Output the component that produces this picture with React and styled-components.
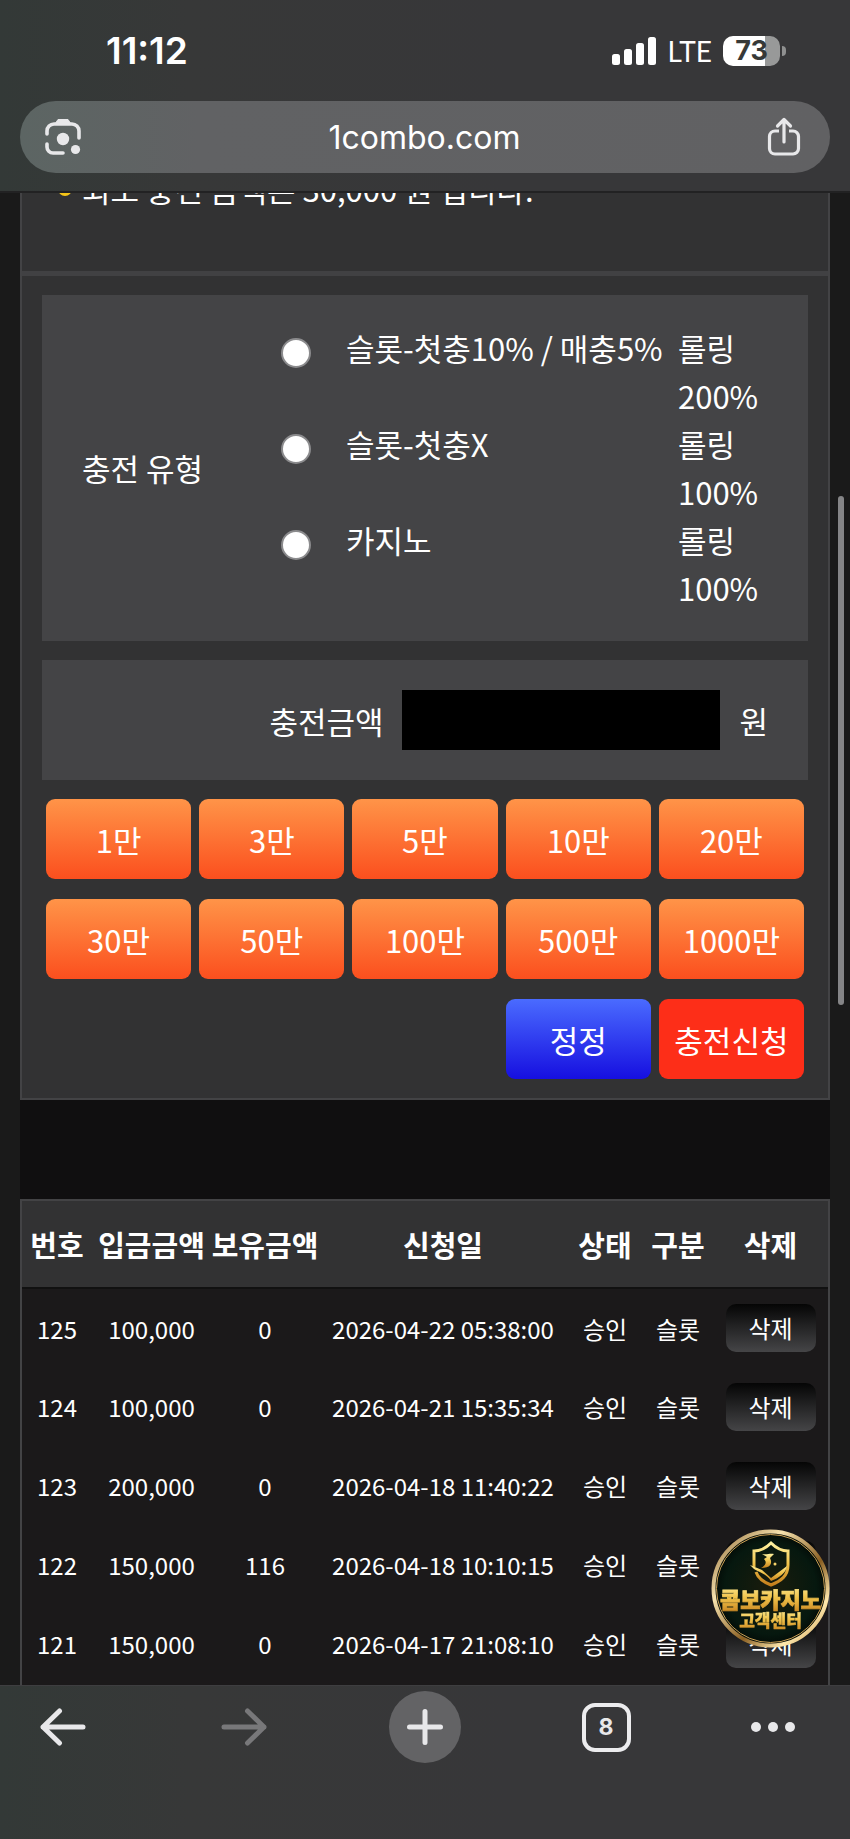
import React, { useState } from 'react';

import styled, { createGlobalStyle } from 'styled-components';

// Constants
const fonts = {
  system: "Inter, 'Liberation Sans', sans-serif",
  carrier: "Lato, 'Liberation Sans', sans-serif",
  page: "'Noto Sans CJK KR', 'Noto Sans', sans-serif",
};

const colors = {
  page: '#1a1a1a',
  band: '#100f10',
  panel: '#323233',
  box: '#444446',
  border: '#434345',
  row: '#1b191a',
  bar: 'linear-gradient(90deg, #333937 0%, #373838 22%, #373739 60%)',
};

const GlobalStyle = createGlobalStyle`
  * {
    box-sizing: border-box;
  }

  body {
    margin: 0;
    background: ${colors.page};
    color: #ffffff;
    font-family: ${fonts.page};
    font-size: 31px;
  }

  button, input {
    font: inherit;
    color: inherit;
  }
`;

const Screen = styled.div`
  display: flex;
  flex-direction: column;
  min-height: 100vh;
`;

const BrowserHeader = styled.header`
  position: relative;
  z-index: 1;
  padding: 0 20px 18px;
  background: ${colors.bar};
  border-bottom: 2px solid #222223;
  font-family: ${fonts.system};
`;

const StatusBar = styled.div`
  display: flex;
  align-items: center;
  justify-content: space-between;
  height: 101px;
  padding: 0 44px 0 86px;
`;

const Time = styled.span`
  font-size: 37px;
  font-weight: 600;
`;

const StatusIcons = styled.div`
  display: flex;
  align-items: center;
  gap: 11px;
`;

const Carrier = styled.span`
  font-family: ${fonts.carrier};
  font-size: 28px;
`;

const Battery = styled.div`
  display: flex;
  align-items: center;
  gap: 2px;

  &::after {
    content: '';
    width: 4px;
    height: 10px;
    border-radius: 0 5px 5px 0;
    background: #8f9090;
  }
`;

const BatteryLevel = styled.span`
  width: 57px;
  height: 30px;
  border-radius: 10px;
  background: linear-gradient(90deg, #ffffff 73%, #989999 73%);
  color: #363938;
  font-size: 27px;
  font-weight: 700;
  line-height: 30px;
  text-align: center;
`;

const AddressBar = styled.div`
  display: flex;
  align-items: center;
  justify-content: space-between;
  height: 72px;
  padding: 0 29px 0 24px;
  border-radius: 36px;
  background: linear-gradient(90deg, #5c6563 0%, #616264 22%, #616163 100%);
`;

const Address = styled.span`
  font-size: 32px;
`;

const IconButton = styled.button`
  display: flex;
  align-items: center;
  justify-content: center;
  padding: 0;
  border: 0;
  background: none;
  color: #e8e8ea;

  &:disabled {
    color: #78787a;
  }
`;

const Main = styled.main`
  flex: 1;
  display: flex;
  flex-direction: column;
  margin: 0 20px;
  background: ${colors.band};
`;

const Panel = styled.section`
  margin-bottom: 99px;
  border: 2px solid ${colors.border};
  border-top: 0;
  background: ${colors.panel};
`;

// Scrolled partly under the browser header
const Notice = styled.ul`
  margin: -27px 0 0;
  padding: 0 0 59px 60px;
  border-bottom: 5px solid #414143;
  line-height: 46px;
  list-style: none;
`;

const NoticeItem = styled.li`
  display: flex;
  align-items: center;

  &::before {
    content: '';
    width: 14px;
    height: 14px;
    margin: 0 10px 0 -24px;
    border-radius: 50%;
    background: #f5c518;
  }
`;

const Form = styled.form`
  display: flex;
  flex-direction: column;
  gap: 19px;
  padding: 19px 20px;
`;

const TypeBox = styled.div`
  display: flex;
  align-items: center;
  padding: 29px 40px;
  background: ${colors.box};
  line-height: 48px;
`;

const TypeTitle = styled.div`
  flex: 0 0 199px;
`;

const TypeList = styled.div`
  flex: 1;
  display: grid;
`;

const TypeOption = styled.label`
  display: grid;
  grid-template-columns: 65px 1fr 90px;
`;

const Radio = styled.input`
  appearance: none;
  width: 30px;
  height: 30px;
  margin: 14px 0 0;
  border: 2px solid #8b8b8d;
  border-radius: 50%;
  background: #ffffff;

  &:checked {
    border: 9px solid #2f6df6;
  }
`;

const AmountBox = styled.div`
  display: flex;
  align-items: center;
  justify-content: flex-end;
  gap: 19px;
  padding: 30px 40px;
  background: ${colors.box};
`;

const AmountInput = styled.input`
  width: 318px;
  height: 60px;
  padding: 0 12px;
  border: 0;
  background: #000000;
  text-align: right;
`;

const ButtonGrid = styled.div`
  display: grid;
  grid-template-columns: repeat(5, 1fr);
  gap: 20px 8px;
  padding: 0 4px;
`;

const buttonBackgrounds = {
  amount: 'linear-gradient(#ff9448, #fb4f1e)',
  reset: 'linear-gradient(#4a6bff, #160fe0)',
  submit: '#fd2e18',
};

const ActionButton = styled.button`
  height: 80px;
  padding: 0;
  border: 0;
  border-radius: 9px;
  background: ${(props) => buttonBackgrounds[props.$kind || 'amount']};
  white-space: nowrap;
`;

const ResetButton = styled(ActionButton)`
  grid-column: 4;
`;

const History = styled.section`
  flex: 1;
  border: 2px solid ${colors.border};
  border-bottom: 0;
  background: ${colors.row};
`;

const Table = styled.table`
  width: 100%;
  table-layout: fixed;
  border-collapse: collapse;
  font-size: 24px;
  text-align: center;
  white-space: nowrap;

  th {
    height: 87px;
    padding: 0;
    border-bottom: 2px solid #111111;
    background: ${colors.panel};
    font-size: 29px;
    font-weight: 700;
  }

  td {
    height: 79px;
    padding: 0;
  }
`;

const Col = styled.col`
  width: ${(props) => props.$width}px;
`;

const DeleteButton = styled.button`
  display: block;
  width: 90px;
  height: 48px;
  margin: 0 auto;
  padding: 0;
  border: 0;
  border-radius: 10px;
  background: linear-gradient(#050505, #454547);
  line-height: 46px;
`;

const ScrollThumb = styled.div`
  position: fixed;
  top: 496px;
  right: 6px;
  width: 6px;
  height: 509px;
  border-radius: 3px;
  background: #858587;
`;

const SupportLink = styled.a`
  position: fixed;
  right: 20px;
  bottom: 191px;
  width: 119px;
  height: 119px;
`;

const BrowserFooter = styled.footer`
  display: flex;
  align-items: flex-start;
  justify-content: space-between;
  height: 154px;
  padding: 5px 27px 0;
  background: ${colors.bar};
  border-top: 1px solid #3e3e40;
  font-family: ${fonts.system};
`;

const NavButton = styled(IconButton)`
  width: 72px;
  height: 72px;
  border-radius: 50%;
  background: ${(props) => (props.$filled ? '#636365' : 'none')};
`;

const MenuButton = styled(NavButton)`
  justify-content: flex-start;
`;

const TabCount = styled.span`
  width: 49px;
  height: 49px;
  border: 4px solid #ececee;
  border-radius: 13px;
  font-size: 23px;
  font-weight: 700;
  line-height: 41px;
`;

const depositTypes = [
  { id: 'slot', name: '슬롯-첫충10% / 매충5%', rolling: '롤링 200%' },
  { id: 'slotx', name: '슬롯-첫충X', rolling: '롤링 100%' },
  { id: 'casino', name: '카지노', rolling: '롤링 100%' },
];

const amounts = [1, 3, 5, 10, 20, 30, 50, 100, 500, 1000];

const columns = [
  { title: '번호', width: 70 },
  { title: '입금금액', width: 119 },
  { title: '보유금액', width: 108 },
  { title: '신청일', width: 248 },
  { title: '상태', width: 76 },
  { title: '구분', width: 70 },
  { title: '삭제', width: 115 },
];

const deposits = [
  [125, '100,000', 0, '2026-04-22 05:38:00'],
  [124, '100,000', 0, '2026-04-21 15:35:34'],
  [123, '200,000', 0, '2026-04-18 11:40:22'],
  [122, '150,000', 116, '2026-04-18 10:10:15'],
  [121, '150,000', 0, '2026-04-17 21:08:10'],
];

function SignalIcon() {
  return (
    <svg width="45" height="28" viewBox="0 0 45 28" fill="#ffffff">
      <rect x="0" y="17" width="8" height="11" rx="2.5" />
      <rect x="12" y="12" width="8" height="16" rx="2.5" />
      <rect x="24" y="6" width="8" height="22" rx="2.5" />
      <rect x="36" y="0" width="8" height="28" rx="2.5" />
    </svg>
  );
}

function LensIcon() {
  return (
    <svg width="38" height="38" viewBox="0 0 38 38" fill="none" stroke="currentColor" strokeWidth="3.6" strokeLinecap="round">
      <path d="M3 16v-3a7 7 0 0 1 7-7h18a7 7 0 0 1 7 7v7" />
      <path d="M3 26v3a6 6 0 0 0 6 6h10" />
      <path d="M11 6l3-4.500h10l3 4.500z" fill="currentColor" strokeWidth="1" />
      <circle cx="19" cy="21" r="6.200" fill="currentColor" stroke="none" />
      <circle cx="31.500" cy="31.500" r="4.600" fill="currentColor" stroke="none" />
    </svg>
  );
}

function ShareIcon() {
  return (
    <svg width="34" height="40" viewBox="0 0 34 40" fill="none" stroke="currentColor" strokeWidth="3.2" strokeLinecap="round" strokeLinejoin="round">
      <path d="M12 14H8a5.500 5.500 0 0 0-5.500 5.500v12a5.500 5.500 0 0 0 5.500 5.500h18a5.500 5.500 0 0 0 5.500-5.500v-12A5.500 5.500 0 0 0 26 14h-4" strokeLinecap="butt" />
      <path d="M17 25V2.500M10.500 9L17 2.500 23.500 9" />
    </svg>
  );
}

function ArrowIcon({ forward }) {
  return (
    <svg width="46" height="38" viewBox="0 0 46 38" fill="none" stroke="currentColor" strokeWidth="5" strokeLinecap="round" strokeLinejoin="round">
      <path d={forward ? 'M3 19h40M26.500 3L43 19 26.500 35' : 'M43 19H3M19.500 3L3 19l16.500 16'} />
    </svg>
  );
}

function SupportBadge() {
  return (
    <svg width="119" height="119" viewBox="0 0 119 119">
      <defs>
        <linearGradient id="gold" x1="0" y1="0" x2="0" y2="1">
          <stop offset="0" stopColor="#fff2a0" />
          <stop offset="0.5" stopColor="#f0c24a" />
          <stop offset="1" stopColor="#c57f1c" />
        </linearGradient>
        <linearGradient id="ring" x1="0" y1="0" x2="1" y2="1">
          <stop offset="0" stopColor="#8f6a35" />
          <stop offset="0.3" stopColor="#f6e2ae" />
          <stop offset="0.6" stopColor="#8a5f22" />
          <stop offset="0.8" stopColor="#ffe9ad" />
          <stop offset="1" stopColor="#b9853a" />
        </linearGradient>
        <radialGradient id="felt">
          <stop offset="0" stopColor="#1b1c0c" />
          <stop offset="0.8" stopColor="#06180f" />
          <stop offset="1" stopColor="#030a06" />
        </radialGradient>
      </defs>
      <circle cx="59.500" cy="59.500" r="57" fill="url(#felt)" stroke="url(#ring)" strokeWidth="4" />
      <circle cx="59.500" cy="59.500" r="54" fill="none" stroke="#caa055" strokeWidth="1" />
      {/* shield with an open hand across it */}
      <path d="M43 38V22c7 0 12-3 17-8 5 5 10 8 17 8v14c0 11-7 16-17 20-8-3-13-7-15-13" fill="none" stroke="url(#gold)" strokeWidth="3" />
      <path d="M39 36l12 5 9 8 8-6 8-6c-1 7-8 12-16 15-5-8-13-9-17-12z" fill="url(#gold)" />
      <path d="M51 25c5 1 8-1 12 0l-4 4c3 6 0 10-9 10 5-3 6-6 3-9l3-2z" fill="url(#gold)" />
      <circle cx="64" cy="35" r="1.500" fill="#f6d269" />
      <g fill="url(#gold)" stroke="url(#gold)" textAnchor="middle" fontFamily={fonts.page} fontWeight="900">
        <text x="59.500" y="79" fontSize="22" strokeWidth="0.800">콤보카지노</text>
        <text x="59.500" y="98" fontSize="17" strokeWidth="0.400">고객센터</text>
      </g>
    </svg>
  );
}

export default function App() {
  const [type, setType] = useState('');
  const [amount, setAmount] = useState('');

  const addAmount = (value) => setAmount(String(Number(amount) + value * 10000));

  return (
    <React.Fragment>
      <GlobalStyle />
      <Screen>
        <BrowserHeader>
          <StatusBar>
            <Time>11:12</Time>
            <StatusIcons>
              <SignalIcon />
              <Carrier>LTE</Carrier>
              <Battery>
                <BatteryLevel>73</BatteryLevel>
              </Battery>
            </StatusIcons>
          </StatusBar>
          <AddressBar>
            <IconButton type="button" aria-label="Lens"><LensIcon /></IconButton>
            <Address>1combo.com</Address>
            <IconButton type="button" aria-label="Share"><ShareIcon /></IconButton>
          </AddressBar>
        </BrowserHeader>

        <Main>
          <Panel>
            <Notice>
              <NoticeItem>최소 충전 금액은 30,000 원 입니다.</NoticeItem>
            </Notice>

            <Form onSubmit={(e) => e.preventDefault()}>
              <TypeBox role="radiogroup" aria-labelledby="type-title">
                <TypeTitle id="type-title">충전 유형</TypeTitle>
                <TypeList>
                  { depositTypes.map((item) => (
                    <TypeOption key={item.id}>
                      <Radio
                        type="radio"
                        name="type"
                        checked={type === item.id}
                        onChange={() => setType(item.id)}
                      />
                      <span>{item.name}</span>
                      <span>{item.rolling}</span>
                    </TypeOption>
                  )) }
                </TypeList>
              </TypeBox>

              <AmountBox>
                <label htmlFor="amount">충전금액</label>
                <AmountInput
                  id="amount"
                  type="text"
                  value={amount}
                  onChange={(e) => setAmount(e.target.value)}
                />
                <span>원</span>
              </AmountBox>

              <ButtonGrid>
                { amounts.map((value) => (
                  <ActionButton key={value} type="button" onClick={() => addAmount(value)}>
                    {value}만
                  </ActionButton>
                )) }
                <ResetButton type="button" $kind="reset" onClick={() => setAmount('')}>정정</ResetButton>
                <ActionButton type="submit" $kind="submit">충전신청</ActionButton>
              </ButtonGrid>
            </Form>
          </Panel>

          <History>
            <Table>
              <colgroup>
                { columns.map((column) => <Col key={column.title} $width={column.width} />) }
              </colgroup>
              <thead>
                <tr>
                  { columns.map((column) => <th key={column.title}>{column.title}</th>) }
                </tr>
              </thead>
              <tbody>
                { deposits.map(([id, paid, held, date]) => (
                  <tr key={id}>
                    <td>{id}</td>
                    <td>{paid}</td>
                    <td>{held}</td>
                    <td>{date}</td>
                    <td>승인</td>
                    <td>슬롯</td>
                    <td><DeleteButton type="button">삭제</DeleteButton></td>
                  </tr>
                )) }
              </tbody>
            </Table>
          </History>
        </Main>

        <BrowserFooter>
          <NavButton type="button" aria-label="Back"><ArrowIcon /></NavButton>
          <NavButton type="button" aria-label="Forward" disabled><ArrowIcon forward /></NavButton>
          <NavButton type="button" aria-label="New tab" $filled>
            <svg width="36" height="36" viewBox="0 0 36 36" stroke="currentColor" strokeWidth="5" strokeLinecap="round">
              <path d="M18 2.500v31M2.500 18h31" />
            </svg>
          </NavButton>
          <NavButton type="button" aria-label="Tabs"><TabCount>8</TabCount></NavButton>
          <MenuButton type="button" aria-label="Menu">
            <svg width="46" height="12" viewBox="0 0 46 12" fill="currentColor">
              <circle cx="5" cy="6" r="5" />
              <circle cx="22" cy="6" r="5" />
              <circle cx="39" cy="6" r="5" />
            </svg>
          </MenuButton>
        </BrowserFooter>
      </Screen>
      <ScrollThumb />
      <SupportLink href="#support" aria-label="콤보카지노 고객센터"><SupportBadge /></SupportLink>
    </React.Fragment>
  );
}
